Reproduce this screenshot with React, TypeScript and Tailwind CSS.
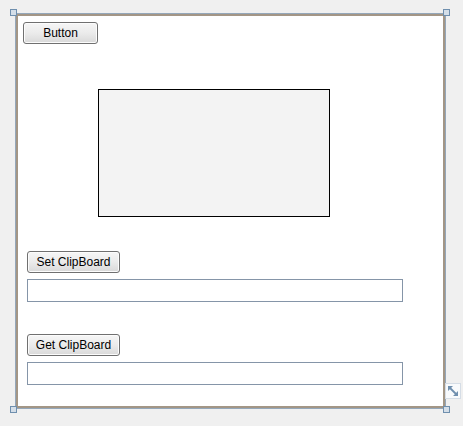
const Handle = ({ className }: { className: string }) => (
  <div className={`absolute w-[7px] h-[7px] bg-[#d4dee8] border border-[#6f8fae] ${className}`}></div>
);

const WinButton = ({ label, className }: { label: string; className: string }) => (
  <button
    className={`h-[22px] rounded-[3px] border border-[#707070] bg-gradient-to-b from-[#f6f6f6] via-[#ebebeb] to-[#d9d9d9] text-[12px] text-black leading-none shadow-[inset_0_0_0_1px_#fcfcfc] ${className}`}
  >
    {label}
  </button>
);

const TextBox = () => (
  <div className="w-[376px] h-[23px] border border-[#8595a8] bg-white"></div>
);

const App = () => {
  return (
    <div
      className="relative w-[463px] h-[426px] bg-[#f0f0f0] overflow-hidden"
      style={{ fontFamily: '"Liberation Sans", Arial, sans-serif' }}
    >
      <div className="absolute left-[15px] top-[13px] w-[431px] h-[396px] border border-[#94a7ba]">
        <div className="w-full h-full border-2 border-[#a39686] bg-white flex flex-col">
          <WinButton label="Button" className="ml-[5px] mt-[6px] w-[75px]" />
          <div className="ml-[80px] mt-[45px] w-[232px] h-[128px] border border-black bg-[#f3f3f3]"></div>
          <div className="ml-[9px] mt-[34px] flex flex-col gap-[6px]">
            <WinButton label="Set ClipBoard" className="w-[93px]" />
            <TextBox />
          </div>
          <div className="ml-[9px] mt-[32px] flex flex-col gap-[6px]">
            <WinButton label="Get ClipBoard" className="w-[93px]" />
            <TextBox />
          </div>
        </div>
      </div>

      <Handle className="left-[10px] top-[9px]" />
      <Handle className="left-[443px] top-[9px]" />
      <Handle className="left-[10px] top-[406px]" />
      <Handle className="left-[443px] top-[406px]" />

      <div className="absolute left-[445px] top-[383px] w-[16px] h-[16px] bg-[#f8fafc] border border-[#d5dde6] flex items-center justify-center">
        <svg width="12" height="12" viewBox="0 0 12 12">
          <path d="M1 1h5L1 6z M11 11H6l5-5z" fill="#6f8fae" />
          <path d="M3 3l6 6" stroke="#6f8fae" strokeWidth="1.8" />
        </svg>
      </div>
    </div>
  );
};

export default App;
